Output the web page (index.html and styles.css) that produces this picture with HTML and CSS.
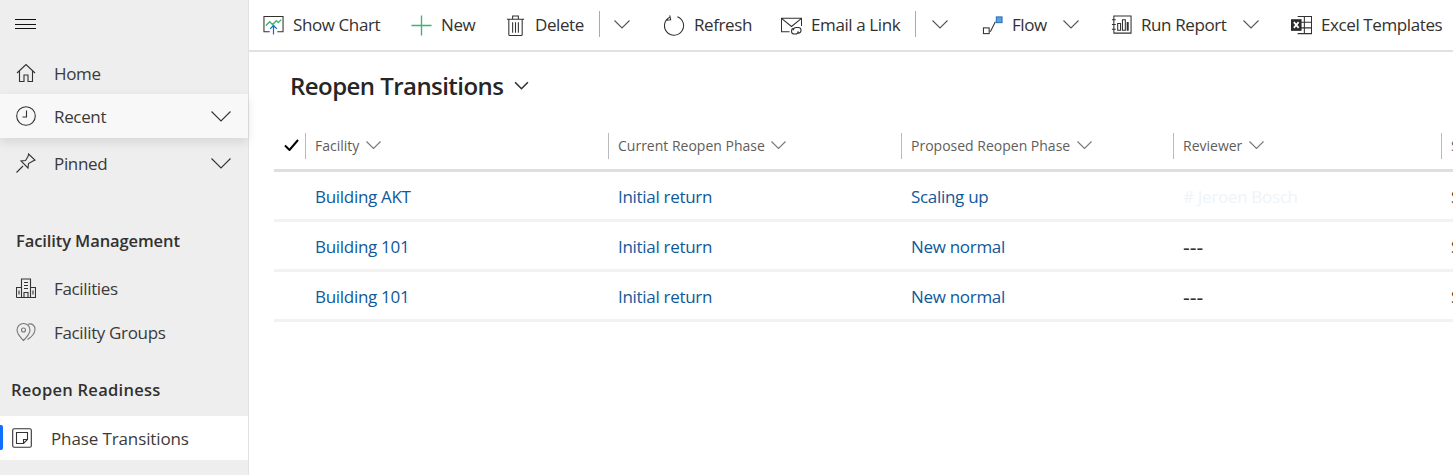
FILE: index.html
```html
<!DOCTYPE html>
<html lang="en">
<head>
	<meta charset="UTF-8">
	<title>Reopen Transitions</title>
	<link rel="stylesheet" href="styles.css">
</head>
<body>
	<div class="app">
		<nav class="side">
			<div class="burger"><span></span><span></span><span></span></div>
			<a class="nav-item home">
				<svg class="nav-ico" viewBox="0 0 20 20"><path d="M1 10 10 1.500 19 10M3.500 8v10.500h4.500v-6.500h4v6.500h4.500V8" /></svg>
				<span class="nav-label">Home</span>
			</a>
			<a class="nav-item recent">
				<svg class="nav-ico" viewBox="0 0 20 20"><circle cx="10" cy="10" r="9.300"/><path d="M10.500 4.500v6.500h-4" /></svg>
				<span class="nav-label">Recent</span>
				<svg class="nav-chev" viewBox="0 0 20 11"><path d="M.5.5 10 10 19.500.5"/></svg>
			</a>
			<a class="nav-item pinned">
				<svg class="nav-ico" viewBox="0 0 20 20"><path d="M.5 19.500 7 13M12.500 1 19 7l-2 1-4.500 2.500-.5 4.500-7-7 4.500-.5L12 3.500z"/></svg>
				<span class="nav-label">Pinned</span>
				<svg class="nav-chev" viewBox="0 0 20 11"><path d="M.5.5 10 10 19.500.5"/></svg>
			</a>
			<h3 class="group-title first">Facility Management</h3>
			<a class="nav-item">
				<svg class="nav-ico" viewBox="0 0 20 20"><path d="M.5 19.500h19v-10h-4.500M5.500 19.500V1h9v18.500M.5 19.500v-10h5M8 4.500h4M8 7.500h4M8 10.500h4M8 19.500v-5h4v5M3 12.500v4M17 12.500v4"/></svg>
				<span class="nav-label">Facilities</span>
			</a>
			<a class="nav-item">
				<svg class="nav-ico faint" viewBox="0 0 20 20"><path d="M7.500 18.500C4 15 1 12 1 8a6.500 6.500 0 0 1 13 0c0 4-3 7-6.500 10.500zM12 2.200C16 1 19.500 3.500 19 8c-.5 3.500-3.500 7-7.500 9.500"/><circle cx="7.500" cy="8" r="2"/></svg>
				<span class="nav-label">Facility Groups</span>
			</a>
			<h3 class="group-title second">Reopen Readiness</h3>
			<a class="nav-item active">
				<svg class="nav-ico" viewBox="0 0 20 20"><rect x=".7" y=".7" width="18.600" height="18.600" rx="1.500"/><path d="M4.500 4.500h11v7l-4 4h-7zM15.500 11.500h-4v4"/></svg>
				<span class="nav-label">Phase Transitions</span>
			</a>
		</nav>

		<main class="main">
			<div class="toolbar">
				<button class="tb w-chart">
					<svg class="tb-ico" viewBox="0 0 22 22"><path class="dark" d="M7 17.500H1V1.500h20v16h-6"/><path class="green" d="M3 11l4-4 3 3 4-4 2 2 3-3"/><path class="blue" d="M11 20.500V11M7.500 14.500 11 11l3.500 3.500"/></svg>
					<span>Show Chart</span>
				</button>
				<button class="tb w-new">
					<svg class="tb-ico" viewBox="0 0 22 22"><path class="green" d="M11 .5v21M.5 11h21"/></svg>
					<span>New</span>
				</button>
				<button class="tb w-delete">
					<svg class="tb-ico" viewBox="0 0 22 22"><path class="dark" d="M2 4.500h18M4 4.500v16a1 1 0 0 0 1 1h12a1 1 0 0 0 1-1v-16M8 4.500V1h6v3.500M8 7.500v11M11 7.500v11M14 7.500v11"/></svg>
					<span>Delete</span>
				</button>
				<i class="tb-sep"></i>
				<button class="tb-chev w-chev1"><svg viewBox="0 0 16 9"><path d="M.5.5 8 8 15.500.5"/></svg></button>
				<button class="tb w-refresh">
					<svg class="tb-ico" viewBox="0 0 22 22"><path class="dark" d="M14 1.800A10 10 0 1 1 6.500 2M6 .5l1 4.500-5 .5"/></svg>
					<span>Refresh</span>
				</button>
				<button class="tb w-email">
					<svg class="tb-ico" viewBox="0 0 22 22"><path class="dark" d="M9 17.500H.5V3.500h21v8M.5 3.500 11 12l10.500-8.500"/><path class="dark" d="M13 16a3 3 0 0 1 3-3h2a3 3 0 0 1 0 6h-1M18 17a3 3 0 0 1-3 3h-1a3 3 0 0 1 0-6"/></svg>
					<span>Email a Link</span>
				</button>
				<i class="tb-sep"></i>
				<button class="tb-chev w-chev2"><svg viewBox="0 0 16 9"><path d="M.5.5 8 8 15.500.5"/></svg></button>
				<button class="tb w-flow">
					<svg class="tb-ico" viewBox="0 0 22 22"><rect class="dark" x="1.500" y="13.500" width="6" height="6"/><path class="dark" d="M8 17h1l5-10"/><rect class="blue-fill" x="15" y="2" width="6" height="6"/></svg>
					<span>Flow</span>
				</button>
				<button class="tb-chev w-chev3"><svg viewBox="0 0 16 9"><path d="M.5.5 8 8 15.500.5"/></svg></button>
				<button class="tb w-report">
					<svg class="tb-ico" viewBox="0 0 22 22"><path class="dark" d="M3 1h18v18H3zM1 5h4M1 10h4M1 15h4M7 9h3v7H7zM12 5h3v11h-3zM17 8h1v8h-1z"/></svg>
					<span>Run Report</span>
				</button>
				<button class="tb-chev w-chev4"><svg viewBox="0 0 16 9"><path d="M.5.5 8 8 15.500.5"/></svg></button>
				<button class="tb w-excel">
					<svg class="tb-ico" viewBox="0 0 22 22"><path class="dark" d="M7 1.500h14.500v18H7M7 7.500h14.500M7 13.500h14.500M14 1.500v18"/><rect class="excel-box" x=".5" y="5" width="10" height="11"/><path class="excel-x" d="M3 7.500l5 6M8 7.500l-5 6"/></svg>
					<span>Excel Templates</span>
				</button>
			</div>

			<div class="view-title">
				<h1>Reopen Transitions</h1>
				<svg class="title-chev" viewBox="0 0 14 8"><path d="M1 1l6 6 6-6"/></svg>
			</div>

			<div class="grid">
				<div class="row head">
					<div class="cell check"><svg viewBox="0 0 15 12"><path d="M1 6.500 5.500 11 14 1"/></svg></div>
					<div class="cell">Facility <svg class="sort" viewBox="0 0 15 8"><path d="M.5.5 7.500 7.500 14.500.5"/></svg></div>
					<div class="cell">Current Reopen Phase <svg class="sort" viewBox="0 0 15 8"><path d="M.5.5 7.500 7.500 14.500.5"/></svg></div>
					<div class="cell">Proposed Reopen Phase <svg class="sort" viewBox="0 0 15 8"><path d="M.5.5 7.500 7.500 14.500.5"/></svg></div>
					<div class="cell">Reviewer <svg class="sort" viewBox="0 0 15 8"><path d="M.5.5 7.500 7.500 14.500.5"/></svg></div>
					<div class="cell">Status</div>
				</div>
				<div class="row">
					<div class="cell check"></div>
					<div class="cell link">Building AKT</div>
					<div class="cell link">Initial return</div>
					<div class="cell link">Scaling up</div>
					<div class="cell ghost"># Jeroen Bosch</div>
					<div class="cell">Submitted</div>
				</div>
				<div class="row">
					<div class="cell check"></div>
					<div class="cell link">Building 101</div>
					<div class="cell link">Initial return</div>
					<div class="cell link">New normal</div>
					<div class="cell none">---</div>
					<div class="cell">Submitted</div>
				</div>
				<div class="row">
					<div class="cell check"></div>
					<div class="cell link">Building 101</div>
					<div class="cell link">Initial return</div>
					<div class="cell link">New normal</div>
					<div class="cell none">---</div>
					<div class="cell">Submitted</div>
				</div>
			</div>
		</main>
	</div>
</body>
</html>
```
FILE: styles.css
```css
*{
	box-sizing: border-box;
}
html,body{
	margin: 0;
	height: 100%;
	overflow: hidden;
}
body{
	font-family: "Open Sans", "Noto Sans", "Liberation Sans", sans-serif;
	color: #323130;
	background: #fff;
}
svg{
	fill: none;
	stroke: #323130;
	stroke-width: 1.1;
}
.app{
	display: flex;
	height: 475px;
}

/* left nav */
.side{
	flex: 0 0 249px;
	background: #eee;
	border-right: 1px solid #e2e2e2;
}
.burger{
	display: flex;
	flex-direction: column;
	gap: 3.500px;
	padding: 19px 0 0 15px;
	height: 51px;
}
.burger span{
	display: block;
	width: 21px;
	height: 1px;
	background: #111;
}
.nav-item{
	display: flex;
	align-items: center;
	height: 44px;
	padding-left: 16px;
	font-size: 17px;
	letter-spacing: -.35px;
	color: #3b3a39;
}
.nav-ico{
	flex: 0 0 20px;
	width: 20px;
	height: 20px;
	margin-right: 18px;
	stroke: #333;
}
.nav-ico.faint{
	stroke: #777;
}
.nav-label{
	flex: 1;
}
.nav-chev{
	width: 20px;
	height: 11px;
	margin-right: 17px;
	stroke: #333;
}
.home{
	margin-bottom: -1px;
}
.recent{
	position: relative;
	background: #f8f8f8;
	box-shadow: 0 4px 10px rgba(0,0,0,.1);
}
.pinned{
	margin-top: 3px;
}
.group-title{
	margin: 0;
	font-size: 16.500px;
	font-weight: 600;
	color: #323130;
	line-height: 24px;
}
.group-title.first{
	padding: 44px 0 13px 16px;
	letter-spacing: -.1px;
}
.group-title.second{
	padding: 24px 0 15px 11px;
	letter-spacing: .27px;
}
.active{
	margin-top: -1px;
	position: relative;
	padding-left: 12px;
	background: #fff;
	letter-spacing: -.12px;
}
.active:before{
	content: "";
	position: absolute;
	left: 0;
	top: 9px;
	width: 3px;
	height: 25px;
	background: #0f6fff;
	border-radius: 0 2px 2px 0;
}
.active .nav-ico{
	margin-right: 19px;
}

/* command bar */
.main{
	flex: 1;
	min-width: 0;
	overflow: hidden;
}
.toolbar{
	display: flex;
	align-items: center;
	height: 52px;
	padding-left: 14px;
	border-bottom: 2px solid #e1e1e1;
	white-space: nowrap;
}
.tb,.tb-chev{
	display: flex;
	align-items: center;
	flex: none;
	height: 36px;
	padding: 0;
	border: 0;
	background: none;
	font: inherit;
	font-size: 17px;
	letter-spacing: -.4px;
	color: #323130;
}
.tb span{
	padding-bottom: 2px;
}
.tb-ico{
	flex: none;
	width: 21px;
	height: 21px;
	margin-right: 9px;
}
.tb-chev svg{
	width: 16px;
	height: 9px;
	margin-bottom: 2px;
	stroke: #555;
}
.green{
	stroke: #3cb371;
	stroke-width: 1.400;
}
.blue{
	stroke: #1a6fc0;
	stroke-width: 1.300;
}
.blue-fill{
	fill: #5a9fe0;
	stroke: #2a6fb8;
}
.excel-box{
	fill: #2b2b2b;
	stroke: #2b2b2b;
}
.excel-x{
	stroke: #fff;
	stroke-width: 1.800;
}
.tb-sep{
	flex: none;
	width: 1px;
	height: 26px;
	margin-bottom: 2px;
	background: #aaa;
}
.w-chart{width: 148px;}
.w-new{width: 94px;}
.w-delete{width: 94px;}
.w-chev1{width: 64px; padding-left: 14px;}
.w-refresh{width: 117px;}
.w-email{width: 134px;}
.w-chev2{width: 66px; padding-left: 16px;}
.w-flow{width: 81px;}
.w-chev3{width: 48px;}
.w-report{width: 132px;}
.w-chev4{width: 48px;}
.w-excel{width: 160px;}

/* view */
.view-title{
	display: flex;
	align-items: center;
	height: 70px;
	padding: 0 0 4px 41px;
}
.view-title h1{
	margin: 0;
	font-size: 24px;
	font-weight: 600;
	letter-spacing: -.55px;
	color: #262626;
}
.title-chev{
	width: 15px;
	height: 9px;
	margin-left: 11px;
	stroke-width: 1.500;
}

/* list */
.grid{
	margin: 3px 0 0 25px;
	width: 1300px;
}
.row{
	display: grid;
	grid-template-columns: 31px 303px 293px 272px 268px 130px;
	height: 50px;
	border-bottom: 3px solid #f3f2f1;
	align-items: center;
	font-size: 17px;
	letter-spacing: -.3px;
}
.row.head{
	height: 47px;
	border-bottom: 3px solid #e1dfdd;
	font-size: 14px;
	letter-spacing: 0;
	color: #605e5c;
	padding-bottom: 3px;
}
.cell{
	padding: 2px 0 0 10px;
	white-space: nowrap;
}
.head .cell{
	height: 26px;
	padding: 0 0 0 9px;
	line-height: 26px;
	border-left: 1px solid #bbb;
}
.head .cell.check{
	border-left: 0;
	padding-left: 10px;
}
.check svg{
	width: 15px;
	height: 12px;
	stroke: #000;
	stroke-width: 2;
}
.sort{
	width: 15px;
	height: 8px;
	margin-left: 3px;
	vertical-align: 2px;
	stroke: #777;
}
.link{
	color: #10599b;
}
.ghost{
	color: #eef4f9;
}
.none{
	font-size: 21px;
	letter-spacing: 0;
}
```
